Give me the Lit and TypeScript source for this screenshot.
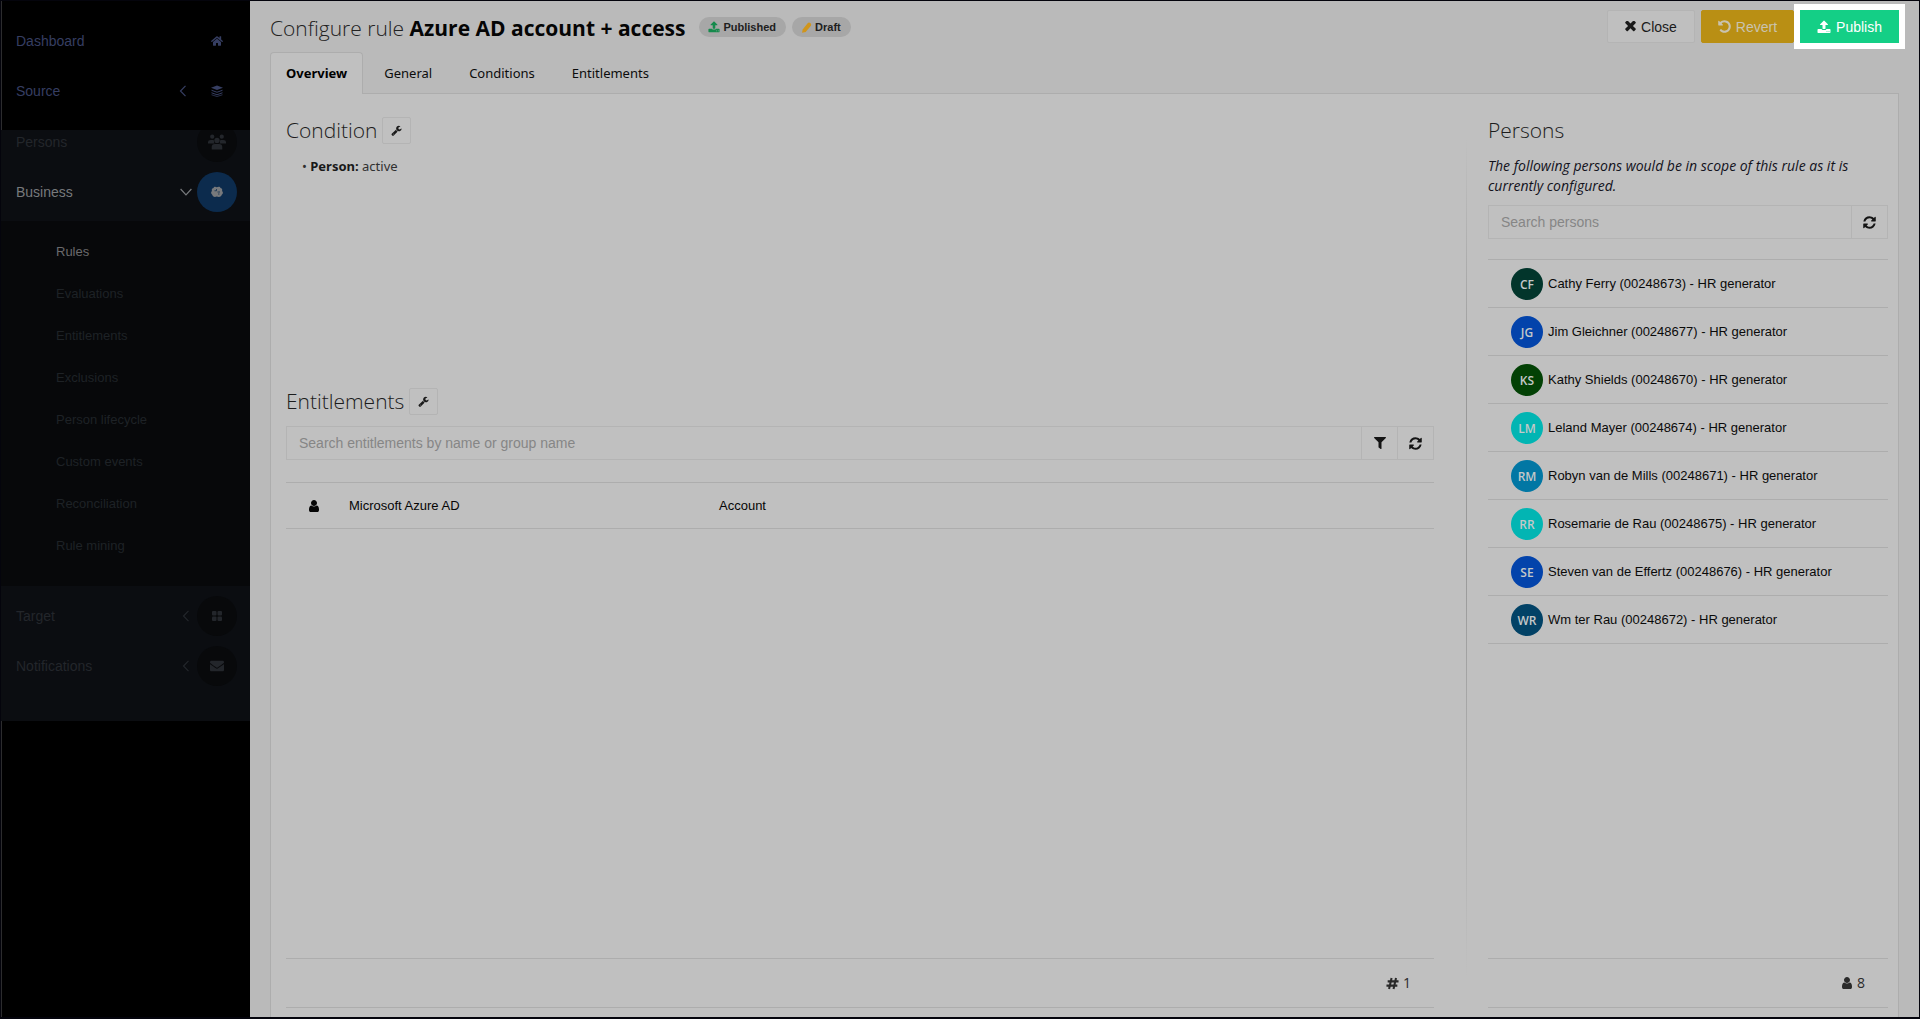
import { LitElement, html, css, svg, nothing } from "lit";
import { customElement, property, state } from "lit/decorators.js";
import { classMap } from "lit/directives/class-map.js";
import { styleMap } from "lit/directives/style-map.js";

interface Glyph {
  box: string;
  body: unknown;
}

const glyphs: Record<string, Glyph> = {
  home: {
    box: "0 0 576 512",
    body: svg`<path d="M280.37 148.26L96 300.11V464a16 16 0 0 0 16 16l112.06-.29a16 16 0 0 0 15.92-16V368a16 16 0 0 1 16-16h64a16 16 0 0 1 16 16v95.64a16 16 0 0 0 16 16.05L464 480a16 16 0 0 0 16-16V300L295.67 148.26a12.19 12.19 0 0 0-15.3 0zM571.6 251.47L488 182.56V44.05a12 12 0 0 0-12-12h-56a12 12 0 0 0-12 12v72.61L318.47 43a48 48 0 0 0-61 0L4.34 251.47a12 12 0 0 0-1.6 16.9l25.5 31A12 12 0 0 0 45.15 301l235.22-193.74a12.19 12.19 0 0 1 15.3 0L530.9 301a12 12 0 0 0 16.9-1.6l25.5-31a12 12 0 0 0-1.7-16.93z"/>`,
  },
  layers: {
    box: "0 0 24 22",
    body: svg`<path d="M12 0 24 4.500 12 9 0 4.500Z"/><path d="M1 9.500 12 13.500 23 9.500M1 14.500 12 18.500 23 14.500" fill="none" stroke="currentColor" stroke-width="2"/><path d="M1 18.500 12 22 23 18.500" fill="none" stroke="currentColor" stroke-width="1.500"/>`,
  },
  users: {
    box: "0 0 34 28",
    body: svg`<circle cx="8" cy="4" r="4"/><circle cx="26" cy="4" r="4"/><circle cx="17" cy="11" r="5"/><path d="M0 17v-3q0-4 5-4h4q2 0 2.500 1-1 4 1 6ZM34 17v-3q0-4-5-4h-4q-2 0-2.500 1 1 4-1 6ZM7 28v-4q0-6 6-6h8q6 0 6 6v4Z"/>`,
  },
  brain: {
    box: "0 0 24 22",
    body: svg`<path d="M11.500 1.500C9-.5 5.500 0 5 3 1.500 3.500 1 7 2 9-.5 11-.5 15 2.500 16.500 3 20 7 22 11.500 20 17 22 21 20 21.500 16.500 24.500 15 24.500 11 22 9 23 7 22.500 3.500 19 3 18.500 0 15-.5 11.500 1.500Z"/><path d="M7 8.500h4V5M13 11h5M14 15h3" fill="none" stroke="#0c2b4d" stroke-width="1.500"/>`,
  },
  grid: {
    box: "0 0 20 20",
    body: svg`<rect width="9" height="9" rx="2"/><rect x="11" width="9" height="9" rx="2"/><rect y="11" width="9" height="9" rx="2"/><rect x="11" y="11" width="9" height="9" rx="2"/>`,
  },
  envelope: {
    box: "0 64 512 384",
    body: svg`<path d="M502.3 190.8c3.9-3.1 9.7-.2 9.7 4.7V400c0 26.500-21.500 48-48 48H48c-26.500 0-48-21.500-48-48V195.6c0-5 5.7-7.8 9.7-4.7 22.4 17.4 52.1 39.500 154.1 113.6 21.1 15.4 56.7 47.8 92.2 47.6 35.7.3 72-32.8 92.3-47.6 102-74.1 131.6-96.3 154-113.7zM256 320c23.2.4 56.6-29.2 73.4-41.4 132.7-96.3 142.8-104.7 173.4-128.7 5.8-4.5 9.2-11.5 9.2-18.9v-19c0-26.500-21.500-48-48-48H48c-26.500 0-48 21.500-48 48v19c0 7.4 3.4 14.3 9.2 18.9 30.6 23.9 40.7 32.4 173.4 128.7 16.8 12.2 50.2 41.8 73.4 41.4z"/>`,
  },
  chevronLeft: {
    box: "0 0 8 12",
    body: svg`<path d="M6.500.8 1.500 6l5 5.200" fill="none" stroke="currentColor" stroke-width="1.200"/>`,
  },
  chevronDown: {
    box: "0 0 12 8",
    body: svg`<path d="M.6 1 6 6.800 11.400 1" fill="none" stroke="currentColor" stroke-width="1.200"/>`,
  },
  upload: {
    box: "0 0 1792 1792",
    body: svg`<path d="M1344 1472q0-26-19-45t-45-19-45 19-19 45 19 45 45 19 45-19 19-45zm256 0q0-26-19-45t-45-19-45 19-19 45 19 45 45 19 45-19 19-45zm128-224v320q0 40-28 68t-68 28h-1472q-40 0-68-28t-28-68v-320q0-40 28-68t68-28h427q21 56 70.5 92t110.5 36h256q61 0 110.5-36t70.5-92h427q40 0 68 28t28 68zm-325-648q-17 40-59 40h-256v448q0 26-19 45t-45 19h-256q-26 0-45-19t-19-45v-448h-256q-42 0-59-40-17-39 14-69l448-448q18-19 45-19t45 19l448 448q31 30 14 69z"/>`,
  },
  pencil: {
    box: "0 0 20 20",
    body: svg`<path d="M3 13.500 12.500 2q2-2 4.500 0t1 5L8.500 18 2 19.500Z"/>`,
  },
  times: {
    box: "280 410 1232 1232",
    body: svg`<path d="M1490 1322q0 40-28 68l-136 136q-28 28-68 28t-68-28l-294-294-294 294q-28 28-68 28t-68-28l-136-136q-28-28-28-68t28-68l294-294-294-294q-28-28-28-68t28-68l136-136q28-28 68-28t68 28l294 294 294-294q28-28 68-28t68 28l136 136q28 28 28 68t-28 68l-294 294 294 294q28 28 28 68z"/>`,
  },
  undo: {
    box: "100 100 1592 1592",
    body: svg`<path d="M1664 896q0 156-61 298t-164 245-245 164-298 61q-172 0-327-72.5t-264-204.5q-7-10-6.5-22.5t8.5-20.5l137-138q10-9 25-9 16 2 23 12 73 95 179 147t225 52q104 0 198.5-40.5t163.5-109.5 109.5-163.5 40.5-198.5-40.5-198.5-109.5-163.5-163.5-109.5-198.5-40.5q-98 0-188 35.5t-160 101.5l137 138q31 30 14 69-17 40-59 40h-448q-26 0-45-19t-19-45v-448q0-42 40-59 39-17 69 14l130 129q107-101 244.5-156.5t284.5-55.5q156 0 298 61t245 164 164 245 61 298z"/>`,
  },
  wrench: {
    box: "0 0 1792 1792",
    body: svg`<path d="M448 1472q0-26-19-45t-45-19-45 19-19 45 19 45 45 19 45-19 19-45zm644-420l-682 682q-37 37-90 37-52 0-91-37l-106-108q-38-36-38-90 0-53 38-91l681-681q39 98 114.5 173.5t173.5 114.5zm634-435q0 39-23 106-47 134-164.5 217.5t-258.5 83.5q-185 0-316.5-131.5t-131.5-316.5 131.5-316.5 316.5-131.5q58 0 121.5 16.5t107.5 46.5q16 11 16 28t-16 28l-293 169v224l193 107q5-3 79-48.5t135.5-81 70.5-35.5q15 0 23.5 10t8.5 25z"/>`,
  },
  filter: {
    box: "0 0 512 512",
    body: svg`<path d="M487.976 0H24.028C2.71 0-8.047 25.866 7.058 40.971L192 225.941V432c0 7.831 3.821 15.17 10.237 19.662l80 55.98C298.02 518.69 320 507.493 320 487.98V225.941l184.947-184.97C520.021 25.896 509.338 0 487.976 0z"/>`,
  },
  refresh: {
    box: "100 100 1592 1592",
    body: svg`<path d="M1639 1056q0 5-1 7-64 268-268 434.5t-478 166.5q-146 0-282.5-55t-243.5-157l-129 129q-19 19-45 19t-45-19-19-45v-448q0-26 19-45t45-19h448q26 0 45 19t19 45-19 45l-137 137q71 66 161 102t187 36q134 0 250-65t186-179q11-17 53-117 8-23 30-23h192q13 0 22.5 9.5t9.5 22.5zm25-800v448q0 26-19 45t-45 19h-448q-26 0-45-19t-19-45 19-45l138-138q-148-137-349-137-134 0-250 65t-186 179q-11 17-53 117-8 23-30 23h-199q-13 0-22.5-9.5t-9.5-22.5v-7q65-268 270-434.5t480-166.5q146 0 284 55.5t245 156.5l130-129q19-19 45-19t45 19 19 45z"/>`,
  },
  user: {
    box: "256 128 1280 1536",
    body: svg`<path d="M1536 1399q0 109-62.5 187t-150.5 78h-854q-88 0-150.5-78t-62.5-187q0-85 8.5-160.5t31.5-152 58.5-131 94-89 134.5-34.5q131 128 313 128t313-128q76 0 134.5 34.5t94 89 58.5 131 31.5 152 8.5 160.5zm-256-887q0 159-112.5 271.5t-271.5 112.5-271.5-112.5-112.5-271.5 112.5-271.5 271.5-112.5 271.5 112.5 112.5 271.5z"/>`,
  },
  hash: {
    box: "0 0 14 13",
    body: svg`<path d="M6 .5 3.300 12.500M10.800.5 8.100 12.500M1.800 4.200H13.500M.5 8.800H12.200" fill="none" stroke="currentColor" stroke-width="2.200"/>`,
  },
};

@customElement("ui-icon")
export class UiIcon extends LitElement {
  static styles = css`
    :host {
      display: inline-flex;
      flex: none;
    }
    .glyph {
      display: block;
      fill: currentColor;
    }
  `;

  @property() name = "home";
  @property({ type: Number }) size = 12;

  render() {
    const glyph = glyphs[this.name];
    return html`<svg
      class="glyph"
      viewBox=${glyph.box}
      width=${this.size}
      height=${this.size}
      aria-hidden="true"
    >
      ${glyph.body}
    </svg>`;
  }
}

interface MenuItem {
  label: string;
  icon: string;
  size: number;
  chevron?: string;
  active?: boolean;
}

@customElement("side-menu")
export class SideMenu extends LitElement {
  static styles = css`
    :host {
      display: flex;
      flex-direction: column;
      background: #000;
      color: #23262b;
      font: 14px/20px "Liberation Sans", Arial, sans-serif;
    }
    .top {
      box-sizing: border-box;
      height: 129px;
      padding-top: 15px;
      background: #000;
      border-left: 1px solid #2c2c2e;
      color: #363e62;
      z-index: 1;
    }
    .group {
      background: #0b0d11;
    }
    .upper {
      height: 91px;
      overflow: hidden;
      display: flex;
      flex-direction: column;
      justify-content: flex-end;
    }
    .lower {
      padding: 5px 0 30px;
    }
    .rest {
      flex: 1;
      border-left: 1px solid #2c2c2e;
    }
    .item {
      flex: none;
      box-sizing: border-box;
      height: 50px;
      padding: 0 13px 0 15px;
      display: grid;
      grid-template-columns: 1fr 12px 40px;
      column-gap: 5px;
      align-items: center;
      color: inherit;
      text-decoration: none;
    }
    .top .item {
      padding-left: 14px;
      column-gap: 8px;
    }
    .upper .item:last-child {
      margin-bottom: 4px;
    }
    .chevron {
      display: flex;
      justify-content: center;
    }
    .disc {
      width: 40px;
      height: 40px;
      border-radius: 50%;
      display: flex;
      align-items: center;
      justify-content: center;
    }
    .group .disc {
      background: #08090b;
    }
    .group .active {
      color: #77797c;
    }
    .group .active .disc {
      background: #0c2b4d;
    }
    .sub {
      margin: 0;
      padding: 10px 0 19px 55px;
      list-style: none;
      background: #07080a;
      font-size: 13px;
      color: #1e2226;
    }
    .sub-link {
      display: flex;
      align-items: center;
      height: 42px;
      color: inherit;
      text-decoration: none;
    }
    .current {
      color: #6a6a6c;
    }
  `;

  private item(m: MenuItem) {
    return html`<a class=${classMap({ item: true, active: !!m.active })} href="#">
      <span>${m.label}</span>
      <span class="chevron"
        >${m.chevron ? html`<ui-icon name=${m.chevron} size="12"></ui-icon>` : nothing}</span
      >
      <span class="disc"><ui-icon name=${m.icon} size=${m.size}></ui-icon></span>
    </a>`;
  }

  render() {
    const subItems = [
      "Rules",
      "Evaluations",
      "Entitlements",
      "Exclusions",
      "Person lifecycle",
      "Custom events",
      "Reconciliation",
      "Rule mining",
    ];
    return html`
      <div class="top">
        ${this.item({ label: "Dashboard", icon: "home", size: 12 })}
        ${this.item({ label: "Source", icon: "layers", size: 12, chevron: "chevronLeft" })}
      </div>
      <div class="group upper">
        ${this.item({ label: "Persons", icon: "users", size: 18 })}
        ${this.item({ label: "Business", icon: "brain", size: 12, chevron: "chevronDown", active: true })}
      </div>
      <ul class="sub">
        ${subItems.map(
          (label, i) =>
            html`<li>
              <a class=${classMap({ "sub-link": true, current: i === 0 })} href="#">${label}</a>
            </li>`
        )}
      </ul>
      <div class="group lower">
        ${this.item({ label: "Target", icon: "grid", size: 10, chevron: "chevronLeft" })}
        ${this.item({ label: "Notifications", icon: "envelope", size: 14, chevron: "chevronLeft" })}
      </div>
      <div class="rest"></div>
    `;
  }
}

interface Person {
  initials: string;
  name: string;
  color: string;
}

const people: Person[] = [
  { initials: "CF", name: "Cathy Ferry (00248673) - HR generator", color: "#02352b" },
  { initials: "JG", name: "Jim Gleichner (00248677) - HR generator", color: "#0343ab" },
  { initials: "KS", name: "Kathy Shields (00248670) - HR generator", color: "#034105" },
  { initials: "LM", name: "Leland Mayer (00248674) - HR generator", color: "#02b5b3" },
  { initials: "RM", name: "Robyn van de Mills (00248671) - HR generator", color: "#0277a4" },
  { initials: "RR", name: "Rosemarie de Rau (00248675) - HR generator", color: "#02b5b3" },
  { initials: "SE", name: "Steven van de Effertz (00248676) - HR generator", color: "#0343ab" },
  { initials: "WR", name: "Wm ter Rau (00248672) - HR generator", color: "#024266" },
];

@customElement("app-root")
export class AppRoot extends LitElement {
  static styles = css`
    :host {
      display: block;
      --ui: "Liberation Sans", Arial, sans-serif;
      --head: "Open Sans", "Noto Sans", sans-serif;
      --label: "Noto Sans", "Open Sans", sans-serif;
      --line: #adadad;
      --soft: #b4b4b4;
      --panel: #c0c0c0;
    }
    .page {
      box-sizing: border-box;
      min-height: 100vh;
      display: grid;
      grid-template-columns: 249px 1fr;
      border: 1px solid #04040c;
      border-bottom-width: 2px;
      background: #bababa;
      color: #161616;
      font: 14px/20px var(--ui);
    }
    .main {
      display: flex;
      flex-direction: column;
      padding: 0 20px;
      min-width: 0;
    }
    .header {
      display: flex;
      align-items: flex-start;
      height: 51px;
    }
    .title {
      margin: 0;
      padding-top: 12px;
      font: 300 21px/30px var(--head);
      color: #222;
    }
    .strong {
      font-weight: 700;
      color: #050505;
    }
    .badge {
      display: flex;
      align-items: center;
      gap: 3px;
      height: 20px;
      margin: 16px 0 0 14px;
      padding: 0 10px 0 9px;
      border-radius: 10px;
      background: #a7a7a7;
      color: #202020;
      font: 700 11px/20px var(--ui);
    }
    .badge + .badge {
      margin-left: 6px;
    }
    .green {
      color: #158a4c;
    }
    .amber {
      color: #d0951c;
    }
    .actions {
      display: flex;
      gap: 6px;
      margin: 9px 0 0 auto;
    }
    .btn {
      box-sizing: border-box;
      display: flex;
      align-items: center;
      justify-content: center;
      gap: 5px;
      height: 33px;
      padding: 0 17px;
      border: 1px solid var(--soft);
      border-radius: 2px;
      background: #bfbfbf;
      color: #1a1a1a;
      font: 14px/20px var(--ui);
    }
    .revert {
      border-color: #b98f14;
      background: #b98f14;
      color: #c9c3b0;
      padding: 0 16px;
    }
    .publish {
      border-color: #14cf86;
      border-radius: 0;
      background: #14cf86;
      color: #fff;
      box-shadow: 0 0 0 6px #fff;
      padding: 0 16px;
    }
    .tabs {
      display: flex;
      gap: 5px;
      margin-bottom: -1px;
      z-index: 1;
    }
    .tab {
      box-sizing: border-box;
      height: 42px;
      padding: 0 15px 2px;
      border: 1px solid transparent;
      border-bottom: 0;
      border-radius: 4px 4px 0 0;
      background: none;
      color: #0c0c0c;
      font: 13px/20px var(--label);
    }
    .selected {
      border-color: var(--line);
      background: var(--panel);
      color: #000;
      font-weight: 700;
    }
    .panel {
      flex: 1;
      display: grid;
      grid-template-columns: 1fr 1px 400px;
      column-gap: 21px;
      padding: 21px 10px 9px 15px;
      border: 1px solid var(--line);
      border-bottom: 0;
      background: var(--panel);
    }
    .left,
    .right {
      display: flex;
      flex-direction: column;
      min-width: 0;
    }
    .left {
      padding-right: 11px;
    }
    .divider {
      margin: 24px 0 30px;
      background: linear-gradient(#c0c0c0, #999 30%, #999 50%, #c0c0c0);
    }
    .heading {
      display: flex;
      align-items: center;
      gap: 5px;
      height: 30px;
    }
    .h2 {
      margin: 0;
      font: 300 21px/30px var(--head);
      color: #1c1c1c;
    }
    .square {
      box-sizing: border-box;
      display: flex;
      align-items: center;
      justify-content: center;
      width: 29px;
      height: 27px;
      padding: 0;
      border: 1px solid var(--soft);
      border-radius: 2px;
      background: none;
      color: #1a1a1a;
    }
    .condition {
      min-height: 271px;
    }
    .facts {
      margin: 11px 0 0;
      padding: 0 0 0 16px;
      list-style: none;
      font: 13px/20px var(--label);
      color: #303030;
    }
    .facts strong {
      color: #181818;
    }
    .search {
      display: flex;
      margin-top: 10px;
    }
    .input {
      box-sizing: border-box;
      flex: 1;
      min-width: 0;
      height: 34px;
      padding: 0 12px;
      border: 1px solid var(--soft);
      border-radius: 0;
      background: none;
      color: #1a1a1a;
      font: 14px/20px var(--ui);
    }
    .input::placeholder {
      color: #868686;
      opacity: 1;
    }
    .addon {
      box-sizing: border-box;
      display: flex;
      align-items: center;
      justify-content: center;
      width: 36px;
      height: 34px;
      padding: 0;
      border: 1px solid var(--soft);
      border-left: 0;
      background: none;
      color: #141414;
    }
    .table {
      width: 100%;
      margin-top: 22px;
      border-collapse: collapse;
      table-layout: fixed;
      font-size: 13px;
      color: #060606;
    }
    .table td {
      height: 45px;
      padding: 0;
      border-top: 1px solid var(--line);
      border-bottom: 1px solid var(--line);
    }
    .kind {
      width: 63px;
    }
    .system {
      width: 370px;
    }
    .kind-icon {
      display: flex;
      padding-left: 22px;
    }
    .footer {
      box-sizing: border-box;
      display: flex;
      align-items: center;
      justify-content: flex-end;
      gap: 4px;
      height: 50px;
      margin-top: auto;
      padding-right: 23px;
      border-top: 1px solid var(--line);
      border-bottom: 1px solid var(--line);
      font: 14px/20px var(--head);
      color: #2a2a2a;
    }
    .note {
      margin: 11px 0 9px;
      font: italic 14px/20px var(--head);
      color: #12121c;
    }
    .right .search {
      margin-top: 0;
    }
    .people {
      margin: 20px 0 0;
      padding: 0;
      list-style: none;
      border-top: 1px solid var(--line);
      font-size: 13px;
      color: #0a0a0a;
    }
    .person {
      box-sizing: border-box;
      display: flex;
      align-items: center;
      gap: 5px;
      height: 48px;
      padding-left: 23px;
      border-bottom: 1px solid var(--line);
    }
    .avatar {
      width: 32px;
      height: 32px;
      border-radius: 50%;
      color: #c4c8c8;
      font: 600 12px/34px var(--head);
      text-align: center;
    }
  `;

  @state() private tab = "Overview";

  render() {
    return html`<div class="page">
      <side-menu></side-menu>
      <main class="main">
        <header class="header">
          <h1 class="title">Configure rule <span class="strong">Azure AD account + access</span></h1>
          <span class="badge"><ui-icon class="green" name="upload" size="12"></ui-icon>Published</span>
          <span class="badge"><ui-icon class="amber" name="pencil" size="11"></ui-icon>Draft</span>
          <div class="actions">
            <button class="btn"><ui-icon name="times" size="11"></ui-icon>Close</button>
            <button class="btn revert"><ui-icon name="undo" size="13"></ui-icon>Revert</button>
            <button class="btn publish"><ui-icon name="upload" size="14"></ui-icon>Publish</button>
          </div>
        </header>
        <div class="tabs" role="tablist">
          ${["Overview", "General", "Conditions", "Entitlements"].map(
            (t) => html`<button
              class=${classMap({ tab: true, selected: t === this.tab })}
              role="tab"
              aria-selected=${t === this.tab}
              @click=${() => (this.tab = t)}
            >
              ${t}
            </button>`
          )}
        </div>
        <div class="panel">
          <div class="left">
            <section class="condition">
              <div class="heading">
                <h2 class="h2">Condition</h2>
                <button class="square" aria-label="Edit condition">
                  <ui-icon name="wrench" size="11"></ui-icon>
                </button>
              </div>
              <ul class="facts">
                <li>• <strong>Person:</strong> active</li>
              </ul>
            </section>
            <div class="heading">
              <h2 class="h2">Entitlements</h2>
              <button class="square" aria-label="Edit entitlements">
                <ui-icon name="wrench" size="11"></ui-icon>
              </button>
            </div>
            <div class="search">
              <input
                class="input"
                type="text"
                aria-label="Search entitlements"
                placeholder="Search entitlements by name or group name"
              />
              <button class="addon" aria-label="Filter"><ui-icon name="filter" size="12"></ui-icon></button>
              <button class="addon" aria-label="Refresh entitlements">
                <ui-icon name="refresh" size="13"></ui-icon>
              </button>
            </div>
            <table class="table">
              <tbody>
                <tr>
                  <td class="kind"><span class="kind-icon"><ui-icon name="user" size="12"></ui-icon></span></td>
                  <td class="system">Microsoft Azure AD</td>
                  <td>Account</td>
                </tr>
              </tbody>
            </table>
            <div class="footer"><ui-icon name="hash" size="13"></ui-icon>1</div>
          </div>
          <div class="divider"></div>
          <div class="right">
            <div class="heading"><h2 class="h2">Persons</h2></div>
            <p class="note">
              The following persons would be in scope of this rule as it is currently configured.
            </p>
            <div class="search">
              <input class="input" type="text" aria-label="Search persons" placeholder="Search persons" />
              <button class="addon" aria-label="Refresh persons">
                <ui-icon name="refresh" size="13"></ui-icon>
              </button>
            </div>
            <ul class="people">
              ${people.map(
                (p) => html`<li class="person">
                  <span class="avatar" style=${styleMap({ background: p.color })}>${p.initials}</span>
                  <span>${p.name}</span>
                </li>`
              )}
            </ul>
            <div class="footer"><ui-icon name="user" size="12"></ui-icon>8</div>
          </div>
        </div>
      </main>
    </div>`;
  }
}
